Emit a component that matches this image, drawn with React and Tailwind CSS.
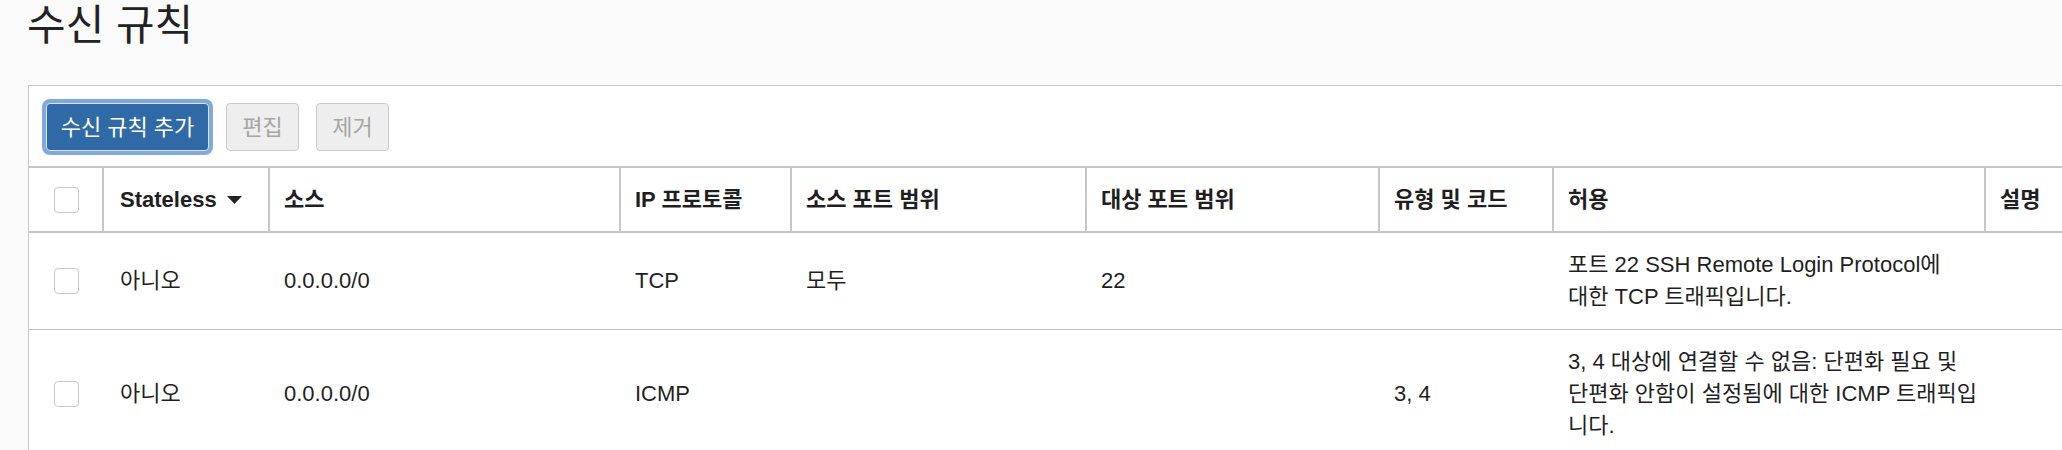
import React from "react";

const cols =
  "grid grid-cols-[73px_166px_351px_171px_295px_293px_174px_432px_200px]";

const headers = [
  "소스",
  "IP 프로토콜",
  "소스 포트 범위",
  "대상 포트 범위",
  "유형 및 코드",
  "허용",
  "설명",
];

const rules = [
  {
    stateless: "아니오",
    source: "0.0.0.0/0",
    protocol: "TCP",
    srcPort: "모두",
    dstPort: "22",
    typeCode: "",
    allows: ["포트 22 SSH Remote Login Protocol에", "대한 TCP 트래픽입니다."],
    desc: "",
  },
  {
    stateless: "아니오",
    source: "0.0.0.0/0",
    protocol: "ICMP",
    srcPort: "",
    dstPort: "",
    typeCode: "3, 4",
    allows: [
      "3, 4 대상에 연결할 수 없음: 단편화 필요 및",
      "단편화 안함이 설정됨에 대한 ICMP 트래픽입",
      "니다.",
    ],
    desc: "",
  },
];

function Checkbox() {
  return (
    <span className="block w-[25px] h-[26px] rounded-[4px] border border-[#c5c7cb] bg-white" />
  );
}

export default function App() {
  return (
    <div className="w-full h-[450px] overflow-hidden bg-[#fafafa] text-[#1f1f1f] font-['Liberation_Sans','Noto_Sans_CJK_KR',sans-serif]">
      {/* page title */}
      <h1 className="pl-[27px] text-[42px] leading-[52px] font-normal text-[#222]">
        수신 규칙
      </h1>

      {/* rules card */}
      <div className="ml-[28px] mt-[33px] w-[2160px] bg-white border border-[#c4c6ca]">
        {/* toolbar */}
        <div className="flex items-center gap-[17px] px-[17px] pt-[17px] pb-[15px]">
          <button className="w-[163px] h-[48px] rounded-[4px] bg-[#2f6aa7] border border-[#dbe5f1] shadow-[0_0_0_4px_#80a9dc] text-white text-[22px]">
            수신 규칙 추가
          </button>
          <button className="w-[73px] h-[48px] rounded-[4px] bg-[#eeeeee] border border-[#c9cacc] text-[#a5a5a5] text-[22px]">
            편집
          </button>
          <button className="w-[73px] h-[48px] rounded-[4px] bg-[#eeeeee] border border-[#c9cacc] text-[#a5a5a5] text-[22px]">
            제거
          </button>
        </div>

        {/* header row */}
        <div className={`${cols} border-t-2 border-b-2 border-[#c4c6ca] text-[22px] font-bold`}>
          <div className="flex items-center h-[63px] pl-[25px]">
            <Checkbox />
          </div>
          <div className="flex items-center gap-[10px] border-l-2 border-[#c4c6ca] pl-[16px]">
            <span>Stateless</span>
            <svg width="15" height="8" viewBox="0 0 15 8">
              <polygon points="0,0 15,0 7.5,8" fill="#222" />
            </svg>
          </div>
          {headers.map((h) => (
            <div
              key={h}
              className="flex items-center border-l-2 border-[#c4c6ca] pl-[14px] whitespace-nowrap"
            >
              {h}
            </div>
          ))}
        </div>

        {/* body rows */}
        {rules.map((r, i) => (
          <div
            key={i}
            className={`${cols} border-b border-[#c4c6ca] text-[22px] leading-[32px]`}
          >
            <div className="flex items-center pl-[25px] py-4">
              <Checkbox />
            </div>
            <div className="flex items-center pl-[18px] py-4">{r.stateless}</div>
            <div className="flex items-center pl-4 py-4">{r.source}</div>
            <div className="flex items-center pl-4 py-4">{r.protocol}</div>
            <div className="flex items-center pl-4 py-4">{r.srcPort}</div>
            <div className="flex items-center pl-4 py-4">{r.dstPort}</div>
            <div className="flex items-center pl-4 py-4">{r.typeCode}</div>
            <div className="flex flex-col justify-center pl-4 py-4 whitespace-nowrap">
              {r.allows.map((line) => (
                <span key={line}>{line}</span>
              ))}
            </div>
            <div className="flex items-center pl-4 py-4">{r.desc}</div>
          </div>
        ))}
      </div>
    </div>
  );
}
